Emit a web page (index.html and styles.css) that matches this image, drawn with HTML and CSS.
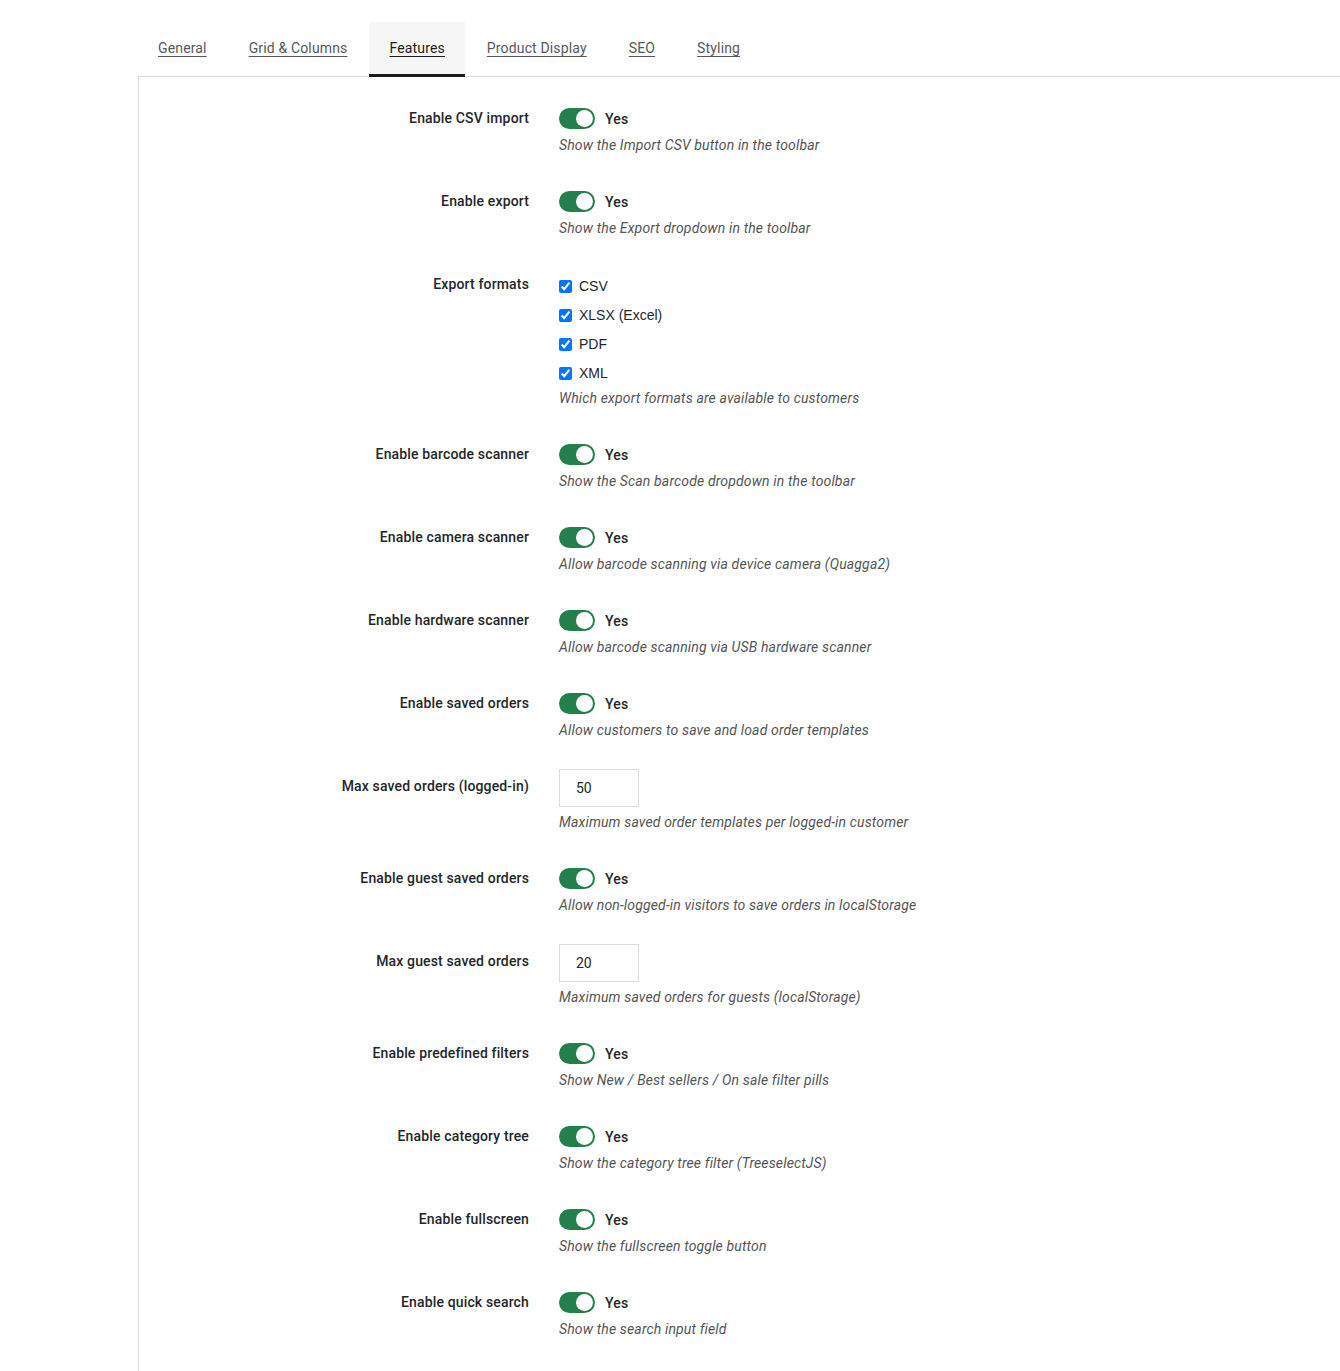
FILE: index.html
```html
<!DOCTYPE html>
<html lang="en">
<head>
<meta charset="utf-8">
<title>Features</title>
<link rel="stylesheet" href="styles.css">
</head>
<body>
<div class="page">
  <nav class="tabs">
    <a class="tab" href="#">General</a>
    <a class="tab" href="#">Grid &amp; Columns</a>
    <a class="tab active" href="#">Features</a>
    <a class="tab" href="#">Product Display</a>
    <a class="tab" href="#">SEO</a>
    <a class="tab" href="#">Styling</a>
  </nav>
  <div class="panel">
    <div class="row">
      <div class="label">Enable CSV import</div>
      <div class="control">
        <div class="switch-line"><span class="switch"><span class="knob"></span></span><span class="yes">Yes</span></div>
        <div class="help">Show the Import CSV button in the toolbar</div>
      </div>
    </div>
    <div class="row">
      <div class="label">Enable export</div>
      <div class="control">
        <div class="switch-line"><span class="switch"><span class="knob"></span></span><span class="yes">Yes</span></div>
        <div class="help">Show the Export dropdown in the toolbar</div>
      </div>
    </div>
    <div class="row">
      <div class="label">Export formats</div>
      <div class="control">
        <div class="checks">
          <label class="check"><input type="checkbox" checked><span>CSV</span></label>
          <label class="check"><input type="checkbox" checked><span>XLSX (Excel)</span></label>
          <label class="check"><input type="checkbox" checked><span>PDF</span></label>
          <label class="check"><input type="checkbox" checked><span>XML</span></label>
        </div>
        <div class="help help-checks">Which export formats are available to customers</div>
      </div>
    </div>
    <div class="row">
      <div class="label">Enable barcode scanner</div>
      <div class="control">
        <div class="switch-line"><span class="switch"><span class="knob"></span></span><span class="yes">Yes</span></div>
        <div class="help">Show the Scan barcode dropdown in the toolbar</div>
      </div>
    </div>
    <div class="row">
      <div class="label">Enable camera scanner</div>
      <div class="control">
        <div class="switch-line"><span class="switch"><span class="knob"></span></span><span class="yes">Yes</span></div>
        <div class="help">Allow barcode scanning via device camera (Quagga2)</div>
      </div>
    </div>
    <div class="row">
      <div class="label">Enable hardware scanner</div>
      <div class="control">
        <div class="switch-line"><span class="switch"><span class="knob"></span></span><span class="yes">Yes</span></div>
        <div class="help">Allow barcode scanning via USB hardware scanner</div>
      </div>
    </div>
    <div class="row">
      <div class="label">Enable saved orders</div>
      <div class="control">
        <div class="switch-line"><span class="switch"><span class="knob"></span></span><span class="yes">Yes</span></div>
        <div class="help">Allow customers to save and load order templates</div>
      </div>
    </div>
    <div class="row row-input">
      <div class="label label-input">Max saved orders (logged-in)</div>
      <div class="control">
        <input class="num" type="text" value="50">
        <div class="help help-input">Maximum saved order templates per logged-in customer</div>
      </div>
    </div>
    <div class="row">
      <div class="label">Enable guest saved orders</div>
      <div class="control">
        <div class="switch-line"><span class="switch"><span class="knob"></span></span><span class="yes">Yes</span></div>
        <div class="help">Allow non-logged-in visitors to save orders in localStorage</div>
      </div>
    </div>
    <div class="row row-input">
      <div class="label label-input">Max guest saved orders</div>
      <div class="control">
        <input class="num" type="text" value="20">
        <div class="help help-input">Maximum saved orders for guests (localStorage)</div>
      </div>
    </div>
    <div class="row">
      <div class="label">Enable predefined filters</div>
      <div class="control">
        <div class="switch-line"><span class="switch"><span class="knob"></span></span><span class="yes">Yes</span></div>
        <div class="help">Show New / Best sellers / On sale filter pills</div>
      </div>
    </div>
    <div class="row">
      <div class="label">Enable category tree</div>
      <div class="control">
        <div class="switch-line"><span class="switch"><span class="knob"></span></span><span class="yes">Yes</span></div>
        <div class="help">Show the category tree filter (TreeselectJS)</div>
      </div>
    </div>
    <div class="row">
      <div class="label">Enable fullscreen</div>
      <div class="control">
        <div class="switch-line"><span class="switch"><span class="knob"></span></span><span class="yes">Yes</span></div>
        <div class="help">Show the fullscreen toggle button</div>
      </div>
    </div>
    <div class="row">
      <div class="label">Enable quick search</div>
      <div class="control">
        <div class="switch-line"><span class="switch"><span class="knob"></span></span><span class="yes">Yes</span></div>
        <div class="help">Show the search input field</div>
      </div>
    </div>
  </div>
</div>
</body>
</html>
```
FILE: styles.css
```css
html, body {
  margin: 0;
  padding: 0;
  background: #ffffff;
}
body {
  font-family: Roboto, "Noto Sans", "Liberation Sans", sans-serif;
  font-size: 14px;
  letter-spacing: 0.15px;
  color: #25262a;
}
.page {
  padding: 22px 0 0 138px;
  min-height: 1349px;
}
.tabs {
  display: flex;
  gap: 2px;
  height: 55px;
}
.tab {
  display: block;
  padding: 16px 20px 0;
  height: 36px;
  line-height: 20px;
  font-size: 14px;
  color: #55585d;
  text-decoration: underline;
  text-underline-offset: 3px;
  border-bottom: 3px solid transparent;
}
.tab.active {
  background: #f6f6f6;
  color: #1d1d1b;
  border-bottom-color: #1d1d1b;
}
.panel {
  border-top: 1px solid #dedede;
  border-left: 1px solid #dedede;
  margin-top: -1px;
  padding-top: 31px;
  min-height: 1264px;
  display: flex;
  flex-direction: column;
  gap: 36px;
}
.row {
  display: grid;
  grid-template-columns: 390px 1fr;
  column-gap: 30px;
}
.row-input {
  margin-top: -7px;
}
.label {
  text-align: right;
  font-weight: 500;
  line-height: 20px;
  color: #25262a;
}
.label-input {
  padding-top: 7px;
}
.control {
  display: flex;
  flex-direction: column;
  align-items: flex-start;
}
.switch-line {
  display: flex;
  align-items: center;
  height: 21px;
  gap: 10px;
}
.switch {
  display: flex;
  align-items: center;
  justify-content: flex-end;
  width: 36px;
  height: 21px;
  padding: 0 2px;
  box-sizing: border-box;
  border-radius: 11px;
  background: #23804d;
}
.knob {
  width: 17px;
  height: 17px;
  border-radius: 50%;
  background: #ffffff;
}
.yes {
  font-weight: 500;
  color: #25262a;
  line-height: 20px;
}
.help {
  margin-top: 6px;
  line-height: 20px;
  font-style: italic;
  color: #555555;
}
.help-checks {
  margin-top: 4px;
}
.help-input {
  margin-top: 5px;
}
.checks {
  display: flex;
  flex-direction: column;
  gap: 7px;
  padding-top: 1px;
}
.check {
  display: flex;
  align-items: center;
  height: 22px;
  gap: 7px;
  font-family: "Liberation Sans", Arial, sans-serif;
  font-size: 14px;
  letter-spacing: 0;
  color: #25262a;
}
.check input {
  margin: 0;
  width: 13px;
  height: 13px;
  accent-color: #0075ff;
}
.num {
  width: 80px;
  height: 38px;
  box-sizing: border-box;
  border: 1px solid #dcdcdc;
  padding: 0 16px;
  font-family: Roboto, "Noto Sans", sans-serif;
  font-size: 14px;
  color: #25262a;
  background: #ffffff;
  outline: none;
}
```
